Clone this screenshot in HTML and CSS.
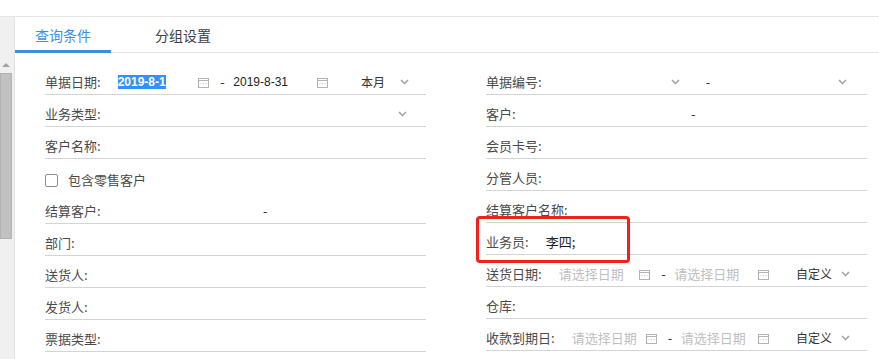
FILE: index.html
```html
<!DOCTYPE html>
<html lang="zh-CN">
<head>
<meta charset="utf-8">
<title>查询条件</title>
<link rel="stylesheet" href="styles.css">
</head>
<body>
<div class="topbar"></div>
<div class="main">
  <div class="scrollbar">
    <div class="arrow-up"></div>
    <div class="thumb"></div>
  </div>
  <div class="content">
    <div class="tabs">
      <div class="tab active">查询条件</div>
      <div class="tab">分组设置</div>
    </div>
    <div class="form">
      <div class="col">
        <div class="row">
          <span class="label">单据日期:</span>
          <div class="range">
            <div class="half"><span class="val num"><span class="selected">2019-8-1</span></span><svg class="cal" width="11" height="11" viewBox="0 0 11 11"><rect x="0.5" y="1.5" width="10" height="9" fill="none" stroke="#b3b3b3"/><path d="M1 3.5h9" stroke="#b3b3b3"/><path d="M2.5 6.5h1M5 6.5h1M7.5 6.5h1" stroke="#c4c4c4"/></svg></div>
            <span class="dash">-</span>
            <div class="half"><span class="val num dark">2019-8-31</span><svg class="cal" width="11" height="11" viewBox="0 0 11 11"><rect x="0.5" y="1.5" width="10" height="9" fill="none" stroke="#b3b3b3"/><path d="M1 3.5h9" stroke="#b3b3b3"/><path d="M2.5 6.5h1M5 6.5h1M7.5 6.5h1" stroke="#c4c4c4"/></svg></div>
          </div>
          <div class="sel"><span class="txt">本月</span><svg class="chev" width="9" height="6" viewBox="0 0 9 6"><path d="M1 1l3.5 3.5L8 1" fill="none" stroke="#a6a6a6" stroke-width="1.7"/></svg></div>
        </div>
        <div class="row">
          <span class="label">业务类型:</span>
          <div class="field drop"><svg class="chev" width="9" height="6" viewBox="0 0 9 6"><path d="M1 1l3.5 3.5L8 1" fill="none" stroke="#a6a6a6" stroke-width="1.7"/></svg></div>
        </div>
        <div class="row">
          <span class="label">客户名称:</span>
          <div class="field"></div>
        </div>
        <div class="row check">
          <span class="box"></span>
          <span class="check-text">包含零售客户</span>
        </div>
        <div class="row">
          <span class="label">结算客户:</span>
          <div class="drange"><span class="part"></span><span class="mid">-</span><span class="part"></span></div>
        </div>
        <div class="row">
          <span class="label">部门:</span>
          <div class="field"></div>
        </div>
        <div class="row">
          <span class="label">送货人:</span>
          <div class="field"></div>
        </div>
        <div class="row">
          <span class="label">发货人:</span>
          <div class="field"></div>
        </div>
        <div class="row">
          <span class="label">票据类型:</span>
          <div class="field"></div>
        </div>
      </div>
      <div class="col">
        <div class="row">
          <span class="label">单据编号:</span>
          <div class="shalf first"><svg class="chev" width="9" height="6" viewBox="0 0 9 6"><path d="M1 1l3.5 3.5L8 1" fill="none" stroke="#a6a6a6" stroke-width="1.7"/></svg></div>
          <span class="dash2">-</span>
          <div class="shalf last"><svg class="chev" width="9" height="6" viewBox="0 0 9 6"><path d="M1 1l3.5 3.5L8 1" fill="none" stroke="#a6a6a6" stroke-width="1.7"/></svg></div>
        </div>
        <div class="row">
          <span class="label">客户:</span>
          <div class="drange"><span class="part"></span><span class="mid">-</span><span class="part"></span></div>
        </div>
        <div class="row">
          <span class="label">会员卡号:</span>
          <div class="field"></div>
        </div>
        <div class="row">
          <span class="label">分管人员:</span>
          <div class="field"></div>
        </div>
        <div class="row">
          <span class="label">结算客户名称:</span>
          <div class="field"></div>
        </div>
        <div class="row">
          <span class="label">业务员:</span>
          <div class="field"><span class="value">李四;</span></div>
        </div>
        <div class="row">
          <span class="label">送货日期:</span>
          <div class="range">
            <div class="half"><span class="val ph">请选择日期</span><svg class="cal" width="11" height="11" viewBox="0 0 11 11"><rect x="0.5" y="1.5" width="10" height="9" fill="none" stroke="#b3b3b3"/><path d="M1 3.5h9" stroke="#b3b3b3"/><path d="M2.5 6.5h1M5 6.5h1M7.5 6.5h1" stroke="#c4c4c4"/></svg></div>
            <span class="dash">-</span>
            <div class="half"><span class="val ph">请选择日期</span><svg class="cal" width="11" height="11" viewBox="0 0 11 11"><rect x="0.5" y="1.5" width="10" height="9" fill="none" stroke="#b3b3b3"/><path d="M1 3.5h9" stroke="#b3b3b3"/><path d="M2.5 6.5h1M5 6.5h1M7.5 6.5h1" stroke="#c4c4c4"/></svg></div>
          </div>
          <div class="sel"><span class="txt">自定义</span><svg class="chev" width="9" height="6" viewBox="0 0 9 6"><path d="M1 1l3.5 3.5L8 1" fill="none" stroke="#a6a6a6" stroke-width="1.7"/></svg></div>
        </div>
        <div class="row">
          <span class="label">仓库:</span>
          <div class="field"></div>
        </div>
        <div class="row">
          <span class="label">收款到期日:</span>
          <div class="range">
            <div class="half"><span class="val ph">请选择日期</span><svg class="cal" width="11" height="11" viewBox="0 0 11 11"><rect x="0.5" y="1.5" width="10" height="9" fill="none" stroke="#b3b3b3"/><path d="M1 3.5h9" stroke="#b3b3b3"/><path d="M2.5 6.5h1M5 6.5h1M7.5 6.5h1" stroke="#c4c4c4"/></svg></div>
            <span class="dash">-</span>
            <div class="half"><span class="val ph">请选择日期</span><svg class="cal" width="11" height="11" viewBox="0 0 11 11"><rect x="0.5" y="1.5" width="10" height="9" fill="none" stroke="#b3b3b3"/><path d="M1 3.5h9" stroke="#b3b3b3"/><path d="M2.5 6.5h1M5 6.5h1M7.5 6.5h1" stroke="#c4c4c4"/></svg></div>
          </div>
          <div class="sel"><span class="txt">自定义</span><svg class="chev" width="9" height="6" viewBox="0 0 9 6"><path d="M1 1l3.5 3.5L8 1" fill="none" stroke="#a6a6a6" stroke-width="1.7"/></svg></div>
        </div>
      </div>
    </div>
  </div>
</div>
<div class="mark-box"></div>
</body>
</html>
```

FILE: styles.css
```css
html, body {
  margin: 0;
  padding: 0;
}
body {
  position: relative;
  width: 879px;
  height: 359px;
  overflow: hidden;
  background: #fff;
  font-family: "Noto Sans CJK SC", "Noto Sans", sans-serif;
  font-size: 13px;
  color: #4a4a4a;
}
.topbar {
  height: 16px;
  border-bottom: 1px solid #e6e6e6;
}
.main {
  display: flex;
  height: 342px;
}
.scrollbar {
  width: 14px;
  flex: 0 0 14px;
  background: #f0f0f0;
  border-right: 1px solid #e2e2e2;
  display: flex;
  flex-direction: column;
  align-items: flex-start;
}
.arrow-up {
  width: 0;
  height: 0;
  margin: 46px 0 0 2px;
  border-left: 4px solid transparent;
  border-right: 4px solid transparent;
  border-bottom: 4px solid #a3a3a3;
}
.thumb {
  margin-top: 6px;
  width: 12px;
  height: 166px;
  box-sizing: border-box;
  background: #c1c1c1;
  border: 1px solid #b3b3b3;
}
.content {
  flex: 1;
}
.tabs {
  display: flex;
  gap: 24px;
  height: 35px;
  border-bottom: 1px solid #e4e4e4;
}
.tab {
  height: 36px;
  box-sizing: border-box;
  margin-bottom: -1px;
  padding: 3px 20px 0;
  line-height: 30px;
  font-size: 14px;
  color: #404040;
}
.tab.active {
  color: #3a8ee6;
  border-bottom: 3px solid #3a8ee6;
}
.form {
  display: grid;
  grid-template-columns: 381px 381px;
  column-gap: 60px;
  padding: 10px 0 0 30px;
}
.row {
  display: flex;
  align-items: center;
  height: 32px;
  box-sizing: border-box;
  padding-top: 7px;
  border-bottom: 1px solid #d4d4d4;
}
.row.check {
  height: 33px;
  padding-top: 9px;
  border-bottom: none;
}
.label {
  margin-right: 14px;
  white-space: nowrap;
  line-height: 20px;
}
.field {
  flex: 1;
  display: flex;
  align-items: center;
  padding-left: 3px;
  height: 20px;
}
.field.drop {
  justify-content: flex-end;
  padding-right: 19px;
}
.value {
  color: #222;
  line-height: 20px;
}
.range {
  flex: 1;
  display: flex;
  align-items: center;
}
.half {
  flex: 1;
  min-width: 0;
  display: flex;
  align-items: center;
}
.val {
  flex: 1;
  padding-left: 3px;
  line-height: 20px;
  white-space: nowrap;
}
.dash + .half .val {
  padding-left: 0;
}
.num {
  font-family: "Liberation Sans", Arial, sans-serif;
  font-size: 12px;
}
.dark {
  color: #222;
}
.selected {
  background: #3390ff;
  color: #fff;
  font-weight: bold;
  line-height: 14px;
  display: inline-block;
}
.ph {
  color: #c0c0c0;
}
.cal {
  display: block;
  flex: 0 0 11px;
}
.dash {
  width: 24px;
  box-sizing: border-box;
  padding-left: 11px;
  text-align: left;
  color: #333;
  line-height: 20px;
}
.mid {
  width: 24px;
  text-align: center;
  color: #333;
  line-height: 20px;
}
.sel {
  width: 98px;
  flex: 0 0 98px;
  display: flex;
  align-items: center;
  font-size: 12px;
  color: #333;
}
.sel .txt {
  flex: 0 0 90px;
  margin-right: -18px;
  text-align: center;
  line-height: 20px;
}
.chev {
  display: block;
}
.shalf {
  display: flex;
  align-items: center;
  justify-content: flex-end;
  height: 20px;
}
.shalf.first {
  flex: 0 0 132px;
  padding-right: 8px;
  box-sizing: border-box;
}
.shalf.last {
  flex: 1;
  padding-right: 20px;
}
.dash2 {
  margin-left: 18px;
  line-height: 20px;
  color: #333;
}
.drange {
  flex: 1;
  display: flex;
  align-items: center;
  padding-right: 10px;
}
.drange .part {
  flex: 1;
}
.box {
  width: 13px;
  height: 13px;
  box-sizing: border-box;
  border: 1px solid #8c8c8c;
  border-radius: 2px;
  margin-right: 10px;
  background: #fff;
}
.check-text {
  line-height: 20px;
}
.mark-box {
  position: absolute;
  left: 476px;
  top: 216px;
  width: 154px;
  height: 47px;
  box-sizing: border-box;
  border: 3px solid #f2201d;
  border-radius: 4px;
}
```
